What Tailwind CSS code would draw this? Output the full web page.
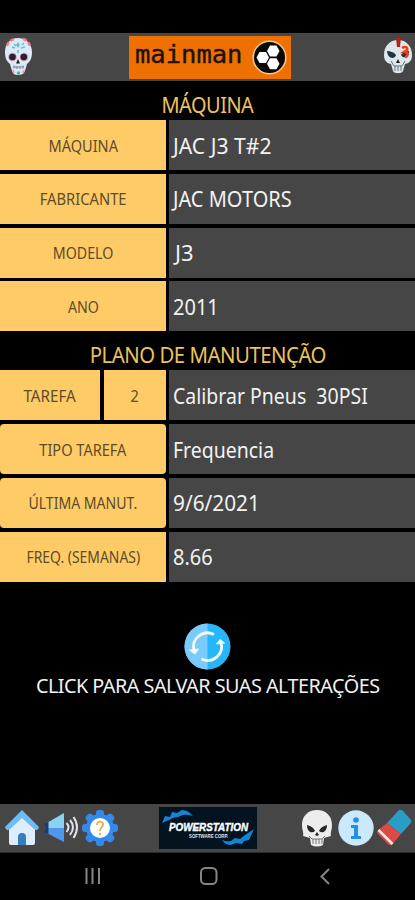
<!DOCTYPE html>
<html lang="pt">
<head>
<meta charset="utf-8">
<title>mainman</title>
<script src="https://cdn.jsdelivr.net/npm/@tailwindcss/browser@4"></script>
</head>
<body class="bg-black">
<div class="w-[415px] h-[900px] overflow-hidden bg-black flex flex-col font-['Noto_Sans',sans-serif] text-[#f2f2f2] whitespace-nowrap">
  <header class="mt-[33px] h-12 shrink-0 bg-[#464646] flex items-center">
    <svg class="w-[30px] h-[40px] ml-1" viewBox="0 0 30 40">
      <path d="M14 1C6 1 1 7 1 15c0 5 1 9 5 12l2 7c1 3 3 4 6 4s6-1 7-4l2-7c4-3 5-7 5-12C28 7 22 1 14 1Z" fill="#dce9f8"/>
      <path d="M3 9c1-4 4-6 7-7M19 2c4 1 6 4 7 7" stroke="#e98084" stroke-width="2.500" fill="none" stroke-dasharray="4 2"/>
      <path d="m14 5 2 3-2 3-2-3Z" fill="#5cc8cc"/><path d="m8 10 3 1M17 11l4-1M14 13v3M10 7l2 2M18 8l2-2" stroke="#62c5cc" stroke-width="1.600"/>
      <circle cx="8.500" cy="20" r="4.300" fill="#d998b4"/><circle cx="20" cy="20" r="4.300" fill="#d998b4"/>
      <circle cx="8.500" cy="20" r="3.300" fill="#281f30"/><circle cx="19.800" cy="20" r="3.300" fill="#281f30"/>
      <path d="m14 22-2 4.500h4Z" fill="#222"/><path d="M9 30h11M10 28.500v3M13 29v3M16 29v3M19 28.500v3" stroke="#7d8796" stroke-width="1"/>
      <path d="M8.500 33l2 3M20.500 33l-2 3" stroke="#ef9aa8" stroke-width="1.500"/><circle cx="14.500" cy="36" r="1.700" fill="#39bd9c"/>
    </svg>
    <div class="w-[162px] h-[43px] ml-[95px] bg-[#ee7000] flex items-center justify-between pl-[6px] pr-[4px]">
      <span class="font-['DejaVu_Sans_Mono',monospace] text-[25.500px] leading-none text-[#1c1208] [-webkit-text-stroke:0.4px_#1c1208] -mt-[4px]">mainman</span>
      <svg class="w-[35px] h-[35px] shrink-0" viewBox="0 0 35 35">
        <circle cx="17.500" cy="17.500" r="16.300" fill="#080808" stroke="#f8c692" stroke-width="1.500"/>
        <g fill="#fff"><path d="m4.500 17.500 3-5.500h6.500l3 5.500-3 5.500H7.500Z"/><path d="m15 11 3-5.500h6.500l3 5.500-3 5.500H18Z"/><path d="m15 23.700 3-5.500h6.500l3 5.500-3 5.500H18Z"/></g>
      </svg>
    </div>
    <svg class="w-[32px] h-[38px] ml-[91px]" viewBox="0 0 32 38">
      <path d="M16 2C8 2 2 8 2 17c0 5 2 8 7 9l2 7c1 3 9 3 10 0l2-7c5-1 7-4 7-9C30 8 24 2 16 2Z" fill="#dce7e9"/>
      <path d="M5 13c3 0 7 1 9 4-1 4-8 5-9-4ZM19 17c2-3 5-4 8-4 0 7-6 8-8 4Z" fill="#26323a"/>
      <path d="M14 0h5l-1 9h-3Z" fill="#b7211b"/><path d="M20 10c3-2 6-1 5 2l-3 2c5 0 4 4 1 5" fill="none" stroke="#ef3b20" stroke-width="2.600"/>
      <path d="m16 21-2 4h4Z" fill="#222"/><path d="M9 23l3 5h8l3-5M13 28v5M16 28v5M19 28v5" fill="none" stroke="#68757a"/>
    </svg>
  </header>

  <main class="flex flex-col">
    <h1 class="h-[39px] pt-[10px] text-center text-[21px] leading-[28px] text-[#ecc25f]"><span class="inline-block tracking-[-0.5px] scale-x-[0.95]">MÁQUINA</span></h1>
    <section class="flex flex-col gap-[3.800px] text-[22px]">
      <div class="h-[50px] flex gap-[3px]"><div class="w-[166px] bg-[#ffcb66] flex items-center justify-center pt-px text-[16px] text-[#5d4b2a]"><span class="scale-x-[0.91]">MÁQUINA</span></div><div class="flex-1 bg-[#464646] flex items-center pl-1"><span class="origin-left scale-x-[0.96]">JAC J3 T#2</span></div></div>
      <div class="h-[50px] flex gap-[3px]"><div class="w-[166px] bg-[#ffcb66] flex items-center justify-center pt-px text-[16px] text-[#5d4b2a]"><span class="scale-x-[0.92]">FABRICANTE</span></div><div class="flex-1 bg-[#464646] flex items-center pl-1"><span class="origin-left scale-x-[0.91]">JAC MOTORS</span></div></div>
      <div class="h-[50px] flex gap-[3px]"><div class="w-[166px] bg-[#ffcb66] flex items-center justify-center pt-px text-[16px] text-[#5d4b2a]"><span class="scale-x-[0.89]">MODELO</span></div><div class="flex-1 bg-[#464646] flex items-center pl-1"><span class="pl-0.5">J3</span></div></div>
      <div class="h-[50px] flex gap-[3px]"><div class="w-[166px] bg-[#ffcb66] flex items-center justify-center pt-px text-[16px] text-[#5d4b2a]"><span class="scale-x-[0.89]">ANO</span></div><div class="flex-1 bg-[#464646] flex items-center pl-1"><span class="origin-left scale-x-[0.91]">2011</span></div></div>
    </section>
    <h2 class="h-[39px] pt-[10px] text-center text-[21px] leading-[28px] text-[#ecc25f]"><span class="inline-block tracking-[-0.5px] scale-x-[0.97]">PLANO DE MANUTENÇÃO</span></h2>
    <section class="flex flex-col gap-[3.800px] text-[22px]">
      <div class="h-[50px] flex gap-[3px]"><div class="w-[166px] flex gap-1 text-[16px] text-[#5d4b2a]"><div class="w-[100px] bg-[#ffcb66] flex items-center justify-center pt-px"><span class="scale-x-[0.95]">TAREFA</span></div><div class="flex-1 bg-[#ffcb66] flex items-center justify-center pt-px"><span class="scale-x-[0.9]">2</span></div></div><div class="flex-1 bg-[#464646] flex items-center pl-1"><span class="whitespace-pre origin-left scale-x-[0.886]">Calibrar Pneus  30PSI</span></div></div>
      <div class="h-[50px] flex gap-[3px]"><div class="w-[166px] rounded-[4px] bg-[#ffcb66] flex items-center justify-center pt-px text-[16px] text-[#5d4b2a]"><span class="scale-x-[0.91]">TIPO TAREFA</span></div><div class="flex-1 bg-[#464646] flex items-center pl-1"><span class="origin-left scale-x-[0.885]">Frequencia</span></div></div>
      <div class="h-[50px] flex gap-[3px]"><div class="w-[166px] rounded-[4px] bg-[#ffcb66] flex items-center justify-center pt-px text-[16px] text-[#5d4b2a]"><span class="scale-x-[0.88]">ÚLTIMA MANUT.</span></div><div class="flex-1 bg-[#464646] flex items-center pl-1"><span class="origin-left scale-x-[0.945]">9/6/2021</span></div></div>
      <div class="h-[50px] flex gap-[3px]"><div class="w-[166px] bg-[#ffcb66] flex items-center justify-center pt-px text-[16px] text-[#5d4b2a]"><span class="scale-x-[0.87]">FREQ. (SEMANAS)</span></div><div class="flex-1 bg-[#464646] flex items-center pl-1"><span class="origin-left scale-x-[0.91]">8.66</span></div></div>
    </section>
    <button class="mt-[41px] flex flex-col items-center">
      <svg class="w-[47px] h-[47px]" viewBox="0 0 47 47">
        <circle cx="23.500" cy="23.500" r="23" fill="#25b7fa"/><path d="M23.500.500a23 23 0 0 0 0 46Z" fill="#7acbfb"/>
        <g fill="none" stroke="#f4fbff" stroke-width="2.800"><path d="M30 11.500A14 14 0 0 0 10 27.500"/><path d="M17.500 36A14 14 0 0 0 37 19.500"/></g>
        <path d="m5.500 27 9-1-3.500 5ZM32.500 21l3.500-4.500 4.500 3.500Z" fill="#f4fbff" stroke="#f4fbff" stroke-linejoin="round"/>
      </svg>
      <span class="text-[19px] leading-[28px] mt-[2px] tracking-[-0.5px] scale-x-[1.043]">CLICK PARA SALVAR SUAS ALTERAÇÕES</span>
    </button>
  </main>

  <footer class="mt-auto shrink-0">
    <div class="h-12 bg-[#464646] flex items-center">
      <svg class="w-[36px] h-[36px] ml-1" viewBox="0 0 36 36">
        <path d="M5 16 18 4l13 12v17q0 2-2 2H7q-2 0-2-2Z" fill="#dceefd"/><path d="M18 0 35 17q-1 5-5 2L18 8 6 19q-4 3-5-2Z" fill="#6dbcf4"/>
        <path d="M14 35V27q0-4 4-4t4 4v8Z" fill="#367fba"/>
      </svg>
      <svg class="w-[36px] h-[34px] ml-[3px]" viewBox="0 0 36 34">
        <path d="M1 12h7v10H1l2-5Z" fill="#173f75"/><path d="m5.500 11 15.500-9v15H5.500Z" fill="#8ad3ee"/><path d="M5.500 17H21v14L5.500 23Z" fill="#5196ee"/>
        <g fill="none" stroke="#dde2ec" stroke-width="2"><path d="M23.500 12q4 4 0 9M27 9q6 7 0 15M30.500 6q7 10 0 21"/></g>
      </svg>
      <svg class="w-[36px] h-[36px] ml-[3px]" viewBox="0 0 36 36">
        <g fill="#3489ec"><circle cx="18" cy="18" r="14"/><g id="teeth"><rect x="14" y="0" width="8" height="36" rx="3"/><rect x="0" y="14" width="36" height="8" rx="3"/></g><use href="#teeth" transform="rotate(45 18 18)"/></g>
        <circle cx="18" cy="18" r="10" fill="#fff"/><path d="M15 15c0-5 7-4 6 0 0 2-3 2-3 6M18 23v2" fill="none" stroke="#f3ad42" stroke-width="2"/>
      </svg>
      <svg class="w-[98px] h-[42px] ml-[41px]" viewBox="0 0 98 42">
        <rect width="98" height="42" fill="#03131f"/>
        <path d="m3 16 3-7 5 1 2-5 5 1 5-3q6 0 11 6-6-2-10-1l-5 2-5 1-4 2ZM95 22l-5 11-5 1-2 3-6-1-5 2q-6 0-9-5 5 2 9 1l4-3 5 1 5-4Z" fill="#1683d2"/>
        <text x="10" y="24" textLength="79" lengthAdjust="spacingAndGlyphs" font-family="Liberation Sans" font-size="11" font-weight="bold" font-style="italic" fill="#fff" stroke="#fff" stroke-width=".4">POWERSTATION</text>
        <text x="30" y="30.500" textLength="39" lengthAdjust="spacingAndGlyphs" font-family="Liberation Sans" font-size="5.500" font-weight="bold" fill="#e2eaf0">SOFTWARE CORP.</text>
      </svg>
      <svg class="w-[32px] h-[37px] ml-[44px]" viewBox="0 0 32 37">
        <path d="M16 0C7 0 1 6 1 15c0 5 2 8 1 11l7 2 1 7q6 3 12 0l1-7 7-2c-1-3 1-6 1-11C31 6 25 0 16 0Z" fill="#ededed"/>
        <path d="M6 15c4 1 7 3 8 6-3 3-8 1-8-6ZM26 15c-4 1-7 3-8 6 3 3 8 1 8-6ZM16 22l-2 3 2 1 2-1Z" fill="#282828"/><path d="M8 26l3 3h10l3-3M12 29v5M15 29v5M18 29v5M21 29v5" fill="none" stroke="#777"/>
      </svg>
      <svg class="w-[36px] h-[36px] ml-[5px]" viewBox="0 0 36 36"><circle cx="18" cy="18" r="17.700" fill="#cae9fc"/><g fill="#248feb"><circle cx="18" cy="10" r="2.800"/><path d="M13 15h7v11h3v3H13v-3h3v-8h-3Z"/></g></svg>
      <svg class="w-[35px] h-[36px] ml-[3px]" viewBox="0 0 35 36">
        <path d="M22 0q2-1 4 1l8 9q1 2-1 4L24 24 10 13Z" fill="#289ec7"/><path d="m10 13 14 11-9 11q-2 1-4-1L1 24q-2-2 0-4Z" fill="#db4a45"/><path d="m1.500 20 14 14" stroke="#f5e9e6" stroke-width="2.500"/>
      </svg>
    </div>
    <nav class="h-[48px] border-t border-[#292d30]" aria-label="Android">
      <svg class="w-full h-full" viewBox="0 0 415 47" fill="none" stroke="#858585" stroke-width="2"><path d="M86.500 15v16M92.500 15v16M99 15v16"/><rect x="201" y="15" width="15.500" height="16" rx="4.500"/><path d="m329 16-7.500 7.500 7.500 7.500"/></svg>
    </nav>
  </footer>
</div>
</body>
</html>
